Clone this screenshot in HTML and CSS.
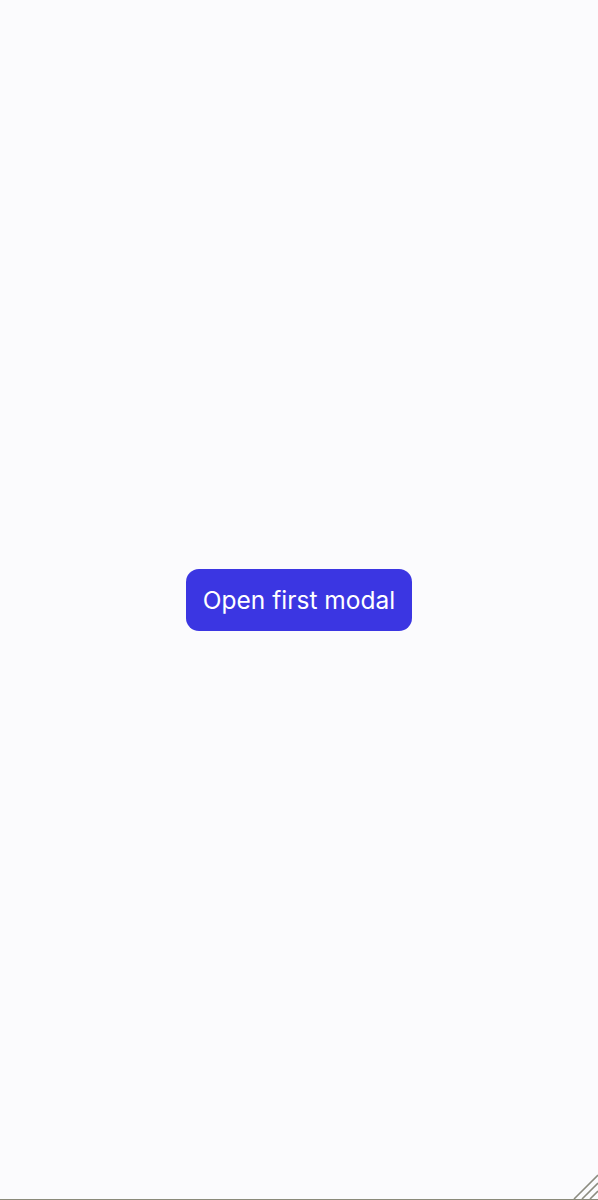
FILE: index.html
```html
<!DOCTYPE html>
<html>
<head>
<meta charset="utf-8">
<link rel="stylesheet" href="styles.css">
</head>
<body>
<main class="page">
  <button class="open-btn">Open first modal</button>
</main>
<svg class="grip" width="26" height="26" viewBox="0 0 26 26">
  <line x1="26" y1="2" x2="2" y2="26" />
  <line x1="26" y1="10" x2="10" y2="26" />
  <line x1="26" y1="18" x2="18" y2="26" />
</svg>
</body>
</html>
```
FILE: styles.css
```css
html, body {
  margin: 0;
  padding: 0;
  height: 100%;
  background: #fbfbfd;
}
.page {
  box-sizing: border-box;
  height: 1200px;
  display: flex;
  align-items: center;
  justify-content: center;
  border-bottom: 1px solid #8a8a7a;
}
.open-btn {
  font-family: Inter, "Noto Sans", sans-serif;
  font-size: 24.5px;
  color: #ffffff;
  background: #3b36e2;
  border: none;
  border-radius: 13px;
  height: 62px;
  padding: 0 17px;
  cursor: pointer;
}
.grip {
  position: absolute;
  right: 0;
  top: 1173px;
}
.grip line {
  stroke: #8c8c80;
  stroke-width: 1.6;
}
```
